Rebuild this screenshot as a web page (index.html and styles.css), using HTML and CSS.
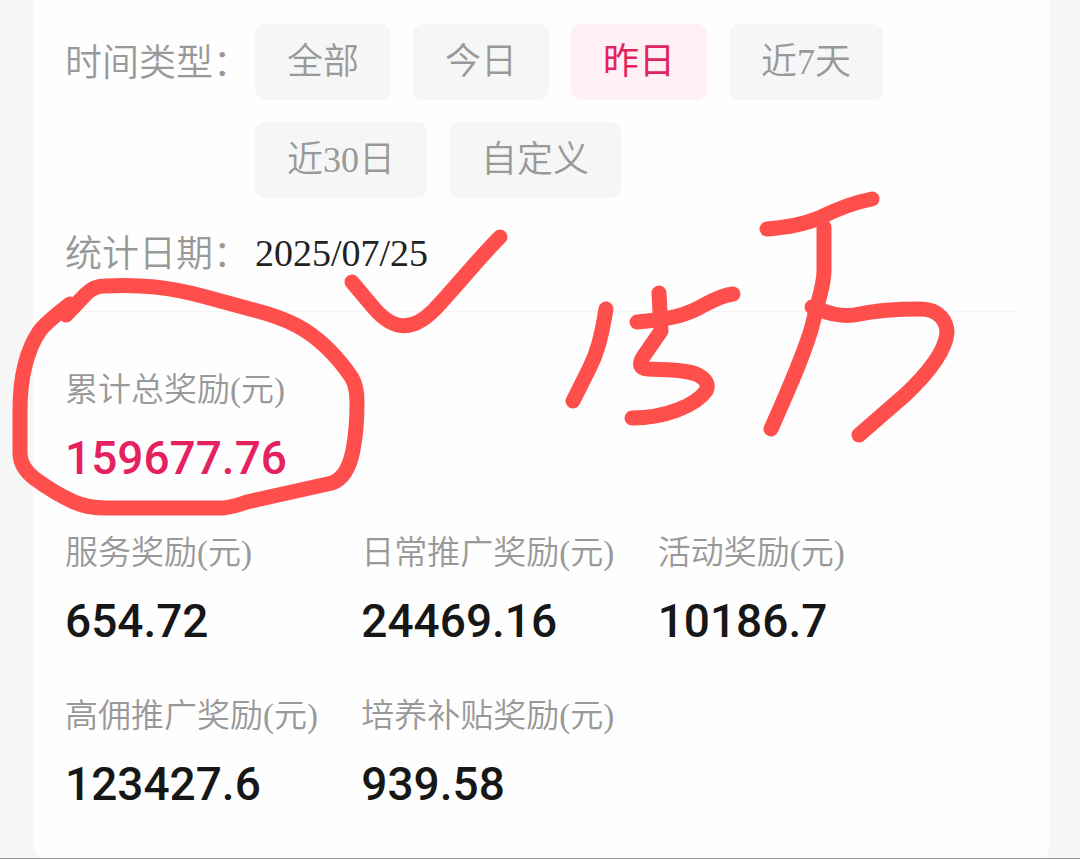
FILE: index.html
```html
<!DOCTYPE html>
<html lang="zh-CN">
<head>
<meta charset="utf-8">
<meta name="viewport" content="width=device-width, initial-scale=1">
<title>奖励统计</title>
<link rel="stylesheet" href="styles.css">
</head>
<body>
<main class="page">
  <section class="card">
    <div class="filters">
      <span class="field-label" id="range-label">时间类型：</span>
      <div class="options" role="group" aria-labelledby="range-label">
        <button class="option" type="button">全部</button>
        <button class="option" type="button">今日</button>
        <button class="option option-active" type="button" aria-pressed="true">昨日</button>
        <button class="option" type="button">近7天</button>
        <button class="option" type="button">近30日</button>
        <button class="option" type="button">自定义</button>
      </div>
    </div>
    <div class="date-row">
      <span class="field-label">统计日期：</span>
      <time class="date" datetime="2025-07-25">2025/07/25</time>
    </div>
    <dl class="stats">
      <div class="stat stat-total"><dt>累计总奖励(元)</dt><dd>159677.76</dd></div>
      <div class="stat"><dt>服务奖励(元)</dt><dd>654.72</dd></div>
      <div class="stat"><dt>日常推广奖励(元)</dt><dd>24469.16</dd></div>
      <div class="stat"><dt>活动奖励(元)</dt><dd>10186.7</dd></div>
      <div class="stat"><dt>高佣推广奖励(元)</dt><dd>123427.6</dd></div>
      <div class="stat"><dt>培养补贴奖励(元)</dt><dd>939.58</dd></div>
    </dl>
  </section>
  <svg class="marker" width="1080" height="859" viewBox="0 0 1080 859" aria-hidden="true">
    <!-- ring round the total -->
    <path d="M66 315L86 294Q94 286 104 286C140 284 170 287 206 297L250 309C290 319 308 330 325 346Q340 360 352 378Q357 387 357 402Q357 430 353 450Q348 477 332 483L247 502Q233 507 223 508H105Q88 508 74 502Q54 493 34 478Q20 467 20 453V410C20 378 27 350 39 332Q44 324 70 304"/>
    <!-- tick -->
    <path d="M352 282L373 307C394 332 413 331 434 310C456 287 477 260 500 237"/>
    <!-- handwritten amount -->
    <path d="M606 309C601 339 597 353 590 367L573 401"/>
    <path d="M659 293L661 331L643 357Q636 368 648 369C679 370 688 371 696 374Q711 381 706 391C696 405 666 418 632 418"/>
    <path d="M637 322C673 319 687 315 706 304Q723 295 733 294"/>
    <path d="M767 229C792 227 805 224 819 218C839 208 856 202 872 199"/>
    <path d="M824 227V270Q824 280 820 295L811 330C801 362 787 393 771 429"/>
    <path d="M812 307C827 313 842 318 860 314C883 309 904 309 920 309C940 309 947 322 947 333C945 354 922 379 905 395L859 435"/>
  </svg>
</main>
</body>
</html>
```
FILE: styles.css
```css
* {
  box-sizing: border-box;
}

body {
  margin: 0;
  background: #f6f6f6;
  font-family: "Liberation Serif", "Noto Sans CJK SC", serif;
  font-weight: 350;
  color: #999;
}

.page {
  position: relative;
  min-height: 100vh;
  padding: 0 30px 0 33px;
  border-bottom: 1px solid #999;
  overflow: hidden;
}

.card {
  padding: 24px 34px 44px 32px;
  background: #fefefe;
  border-radius: 0 0 12px 12px;
}

.filters,
.date-row {
  display: flex;
}

.field-label {
  flex: none;
  min-width: 190px;
  padding-top: 2px;
  font-size: 37px;
  line-height: 76px;
}

.options {
  display: flex;
  flex-wrap: wrap;
  gap: 22px;
  max-width: 680px;
}

.option {
  height: 76px;
  padding: 0 32px 8px;
  border: 0;
  border-radius: 10px;
  background: #f6f6f6;
  color: #999;
  font: inherit;
  font-size: 36px;
}

.option-active {
  background: #fff0f5;
  color: #e0245e;
  font-weight: 400;
}

.date-row {
  padding: 17px 0 18px;
  border-bottom: 1px solid #f3f3f3;
}

.date {
  color: #222;
  font-size: 38px;
  line-height: 76px;
}

.stats {
  display: grid;
  grid-template-columns: repeat(3, 1fr);
  row-gap: 41px;
  margin: 0;
  padding: 54px 62px 0 0;
}

.stat-total {
  grid-column: 1 / -1;
}

.stat dt {
  font-size: 33px;
  line-height: 48px;
  white-space: nowrap;
}

.stat dd {
  margin: 14px 0 0;
  color: #171717;
  font-family: Roboto, sans-serif;
  font-size: 46px;
  font-weight: 500;
  line-height: 60px;
}

.stat-total dd {
  color: #e6215f;
}

.marker {
  position: absolute;
  top: 0;
  left: 0;
  fill: none;
  stroke: #ff4f4d;
  stroke-width: 15;
  stroke-linecap: round;
  stroke-linejoin: round;
  pointer-events: none;
}
```
